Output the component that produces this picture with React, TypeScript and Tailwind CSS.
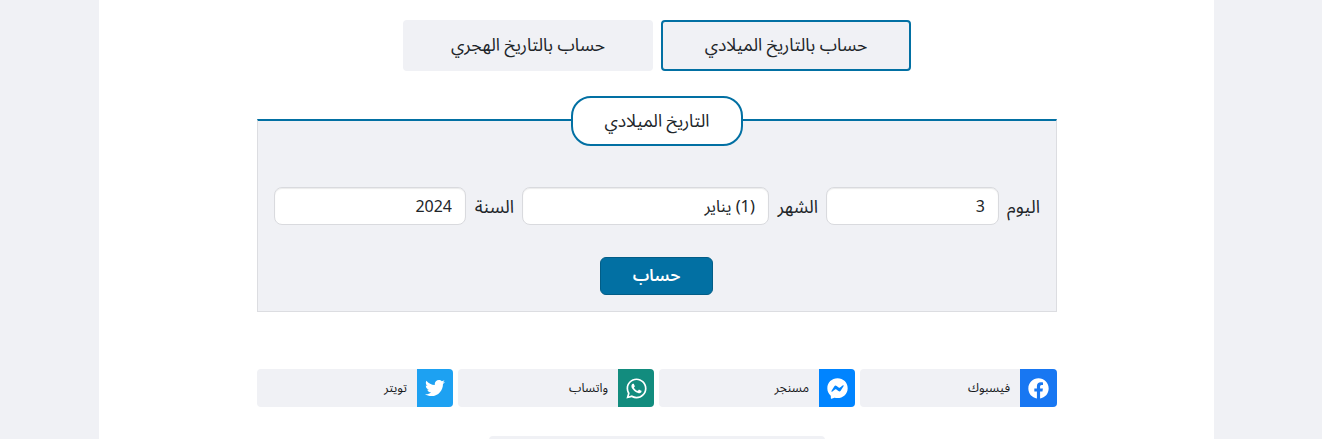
import { FaFacebook, FaFacebookMessenger, FaTwitter, FaWhatsapp } from 'react-icons/fa'

const fieldClass =
  'h-[38px] rounded-lg border border-[#d9dade] bg-white pl-3.5 pr-[13px] pt-px text-right text-[#212529] shadow-[inset_0_1px_1px_rgba(0,0,0,0.08)] outline-none'

const shares = [
  { label: 'فيسبوك', color: 'bg-[#1877f2] w-[37px]', icon: <FaFacebook className="h-[21px] w-[21px]" /> },
  { label: 'مسنجر', color: 'bg-[#0084ff] w-9', icon: <FaFacebookMessenger className="h-[21px] w-[21px]" /> },
  { label: 'واتساب', color: 'bg-[#128c7e] w-9', icon: <FaWhatsapp className="h-[23px] w-[23px]" /> },
  { label: 'تويتر', color: 'bg-[#1da1f2] w-9', icon: <FaTwitter className="h-[20px] w-[20px]" /> },
]

const App = () => {
  return (
    <div className="h-[439px] overflow-hidden bg-[#f0f1f5] font-['Noto_Sans_Arabic','Noto_Sans','Liberation_Sans',sans-serif]" dir="rtl">
      <div className="mr-[108px] h-full w-[1115px] bg-white pt-5">
        <div className="mr-[157px] w-[800px]">
          {/* Tabs */}
          <div className="flex justify-center gap-2">
            <button className="h-[51px] w-[250px] rounded border-2 border-[#0270a3] bg-[#f0f1f5] pt-0.5 text-[17.5px] text-[#212529]">
              حساب بالتاريخ الميلادي
            </button>
            <button className="h-[51px] w-[250px] rounded bg-[#f0f1f5] pt-0.5 text-[17.5px] text-[#212529]">
              حساب بالتاريخ الهجري
            </button>
          </div>

          {/* Form panel */}
          <div className="mt-[48px] h-[193px] border border-t-2 border-[#dcdde1] border-t-[#0270a3] bg-[#f0f1f5] px-4">
            <div className="mx-auto -mt-[25px] flex h-[50px] w-[172px] items-center justify-center rounded-[20px] border-2 border-[#0270a3] bg-white pt-0.5 text-[17.5px] text-[#212529]">
              التاريخ الميلادي
            </div>

            <div className="mt-[41px] flex items-center gap-2 text-[18px] text-[#212529]">
              <label className="w-[33px] whitespace-nowrap pt-[3px]">اليوم</label>
              <input readOnly value="3" dir="rtl" className={`${fieldClass} w-[173px] text-[16px]`} />
              <label className="w-[41px] whitespace-nowrap pt-[3px]">الشهر</label>
              <input readOnly value="(1) يناير" dir="rtl" className={`${fieldClass} w-[247px] text-[16.5px]`} />
              <label className="w-[40px] whitespace-nowrap pt-[3px]">السنة</label>
              <input readOnly value="2024" dir="rtl" className={`${fieldClass} w-[192px] text-[16px]`} />
            </div>

            <div className="mt-8 flex justify-center pr-px">
              <button className="h-[38px] w-[113px] rounded-md border border-[#025d87] bg-[#0270a3] pt-px text-[16.5px] font-semibold text-white">
                حساب
              </button>
            </div>
          </div>

          {/* Share links */}
          <div className="mt-[57px] grid grid-cols-[197px_196px_196px_196px] gap-[5px]">
            {shares.map((share) => (
              <div key={share.label} className="flex h-[38px] items-center overflow-hidden rounded bg-[#f0f1f5]">
                <span className={`flex h-full items-center justify-center text-white ${share.color}`}>
                  {share.icon}
                </span>
                <span className="mr-2.5 text-[12.5px] text-[#16181b]">{share.label}</span>
              </div>
            ))}
          </div>

          <div className="mx-auto mt-[29px] h-3 w-[336px] rounded bg-[#f0f1f5]" />
        </div>
      </div>
    </div>
  )
}

export default App
